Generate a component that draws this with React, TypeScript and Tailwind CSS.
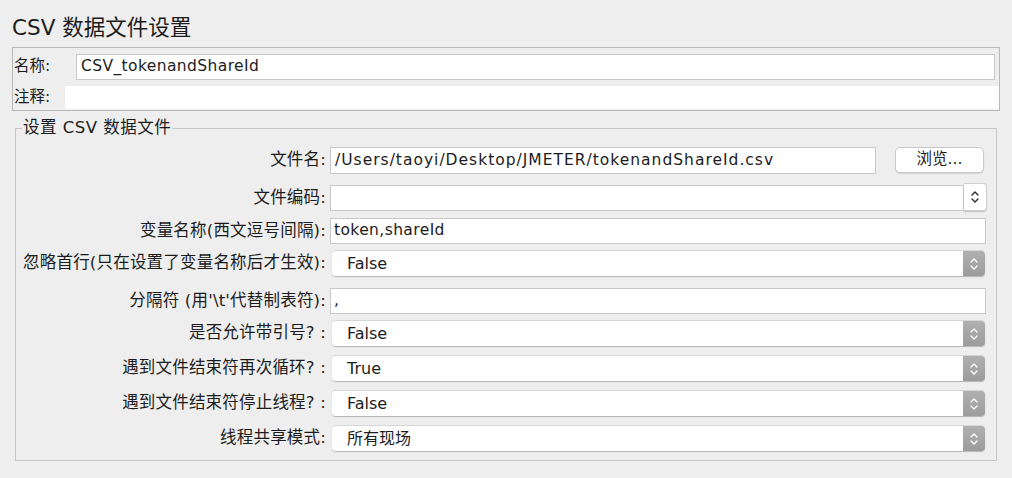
const font = "font-['DejaVu_Sans','Noto_Sans_CJK_SC',sans-serif]";

const Chevrons = ({ color }: { color: string }) => (
  <svg width="10" height="14" viewBox="0 0 10 14" fill="none">
    <path d="M2 5 L5 2 L8 5" stroke={color} strokeWidth="1.4" strokeLinecap="round" strokeLinejoin="round" />
    <path d="M2 9 L5 12 L8 9" stroke={color} strokeWidth="1.4" strokeLinecap="round" strokeLinejoin="round" />
  </svg>
);

const TextField = ({ value, className }: { value: string; className?: string }) => (
  <div
    className={`h-full flex items-center bg-white border border-[#c9c9c9] pl-[3px] text-[15.5px] text-[#1c1c1c] whitespace-nowrap ${className ?? ""}`}
  >
    {value}
  </div>
);

const Select = ({ value }: { value: string }) => (
  <div className="h-full flex ml-[2px] mr-[2px] rounded-[4px] shadow-[0_1px_1px_rgba(0,0,0,0.25)] border-t border-[#d6d6d6]">
    <div className="flex-1 bg-white rounded-l-[4px] flex items-center pl-[15px] text-[16px] text-[#1c1c1c]">
      {value}
    </div>
    <div className="w-[22px] rounded-r-[4px] bg-gradient-to-b from-[#b0b0b0] to-[#9c9c9c] flex items-center justify-center">
      <Chevrons color="#ffffff" />
    </div>
  </div>
);

const Combo = () => (
  <div className="h-full flex">
    <div className="flex-1 bg-white border border-[#c9c9c9]" />
    <div className="w-[23px] bg-white rounded-r-[4px] border border-l-0 border-[#d0d0d0] shadow-[0_1px_1px_rgba(0,0,0,0.2)] flex items-center justify-center -mt-[2px]">
      <Chevrons color="#2a2a2a" />
    </div>
  </div>
);

type Row = { label: string; mt: string; kind: "file" | "text" | "select" | "combo"; value: string };

const rows: Row[] = [
  { label: "文件名:", mt: "mt-[9px]", kind: "file", value: "/Users/taoyi/Desktop/JMETER/tokenandShareId.csv" },
  { label: "文件编码:", mt: "mt-[12px]", kind: "combo", value: "" },
  { label: "变量名称(西文逗号间隔):", mt: "mt-[7px]", kind: "text", value: "token,shareId" },
  { label: "忽略首行(只在设置了变量名称后才生效):", mt: "mt-[6px]", kind: "select", value: "False" },
  { label: "分隔符 (用'\\t'代替制表符):", mt: "mt-[12px]", kind: "text", value: "," },
  { label: "是否允许带引号? :", mt: "mt-[6px]", kind: "select", value: "False" },
  { label: "遇到文件结束符再次循环? :", mt: "mt-[9px]", kind: "select", value: "True" },
  { label: "遇到文件结束符停止线程? :", mt: "mt-[9px]", kind: "select", value: "False" },
  { label: "线程共享模式:", mt: "mt-[9px]", kind: "select", value: "所有现场" },
];

export default function App() {
  return (
    <div className={`w-[1012px] h-[478px] bg-[#eeeeee] px-[12px] text-[#1c1c1c] ${font}`}>
      <div className="h-[47px] pt-[15px] text-[21.5px] leading-[26px]">CSV 数据文件设置</div>

      <div className="h-[64px] border border-[#b9b9b9] flex flex-col">
        <div className="h-[41px] flex items-center pl-[1px] pr-[4px]">
          <span className="w-[62px] text-[15.5px]">名称:</span>
          <div className="flex-1 h-[26px]">
            <TextField value="CSV_tokenandShareId" className="pl-[4px] tracking-[0.4px]" />
          </div>
        </div>
        <div className="flex-1 flex items-center pl-[1px] pb-[1px]">
          <span className="w-[51px] text-[15.5px]">注释:</span>
          <div className="flex-1 h-full bg-white" />
        </div>
      </div>

      <fieldset className="mt-[7px] mx-[3px] border border-[#c6c6c6] pr-[9px] pb-[9px]">
        <legend className="ml-[6px] px-[1px] text-[16.5px] leading-[20px] tracking-[0.5px]">设置 CSV 数据文件</legend>
        {rows.map((r) => (
          <div key={r.label} className={`flex h-[26px] ${r.mt}`}>
            <div className="w-[314px] pr-[4px] text-right text-[16.5px] leading-[26px] whitespace-nowrap tracking-[0.2px]">
              {r.label}
            </div>
            <div className="flex-1 flex">
              {r.kind === "file" && (
                <>
                  <div className="w-[546px] h-[27px]">
                    <TextField value={r.value} className="pl-[4px] tracking-[1px]" />
                  </div>
                  <div className="ml-[19px] w-[89px] h-[26px] bg-white border border-[#c8c8c8] rounded-[5px] shadow-[0_1px_1px_rgba(0,0,0,0.12)] flex items-center justify-center text-[15.5px]">
                    浏览...
                  </div>
                </>
              )}
              {r.kind === "combo" && (
                <div className="flex-1">
                  <Combo />
                </div>
              )}
              {r.kind === "text" && (
                <div className="flex-1 mr-[1px]">
                  <TextField value={r.value} className="tracking-[0.4px]" />
                </div>
              )}
              {r.kind === "select" && (
                <div className="flex-1">
                  <Select value={r.value} />
                </div>
              )}
            </div>
          </div>
        ))}
      </fieldset>
    </div>
  );
}
